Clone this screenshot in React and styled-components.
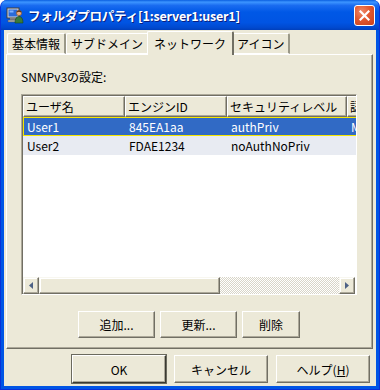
import React from "react";
import styled, { createGlobalStyle } from "styled-components";

const GlobalStyle = createGlobalStyle`
  html, body {
    margin: 0;
    padding: 0;
    background: #fff;
  }
  body {
    font-family: "Noto Sans CJK JP", "Liberation Sans", sans-serif;
    font-size: 12px;
    color: #000;
  }
`;

const Window = styled.div`
  width: 380px;
  height: 390px;
  display: flex;
  flex-direction: column;
  background: #0055e5;
  border-radius: 7px 7px 0 0;
  overflow: hidden;
  box-sizing: border-box;
  border: 1px solid #0831d9;
  border-top: none;
`;

const TitleBar = styled.div`
  height: 30px;
  flex: none;
  display: flex;
  align-items: center;
  padding: 0 4px 0 5px;
  gap: 4px;
  background: linear-gradient(
    to bottom,
    #0a5fe0 0%,
    #3d95ff 7%,
    #1a6cf0 18%,
    #0058e6 40%,
    #0054e3 75%,
    #0049cf 92%,
    #003fbb 100%
  );
`;

const Title = styled.span`
  flex: 1;
  color: #fff;
  font-weight: bold;
  font-size: 12.5px;
  letter-spacing: -0.2px;
  text-shadow: 1px 1px #0a1f80;
  white-space: nowrap;
`;

const CloseButton = styled.div`
  width: 21px;
  height: 21px;
  box-sizing: border-box;
  border: 1px solid #fff;
  border-radius: 3px;
  background: radial-gradient(circle at 35% 30%, #f08a6a 0%, #e2582f 45%, #c8401a 100%);
  display: flex;
  align-items: center;
  justify-content: center;
`;

const Content = styled.div`
  flex: 1;
  display: flex;
  flex-direction: column;
  background: #ece9d8;
  margin: 0 3px 3px 3px;
`;

const TabStrip = styled.div`
  height: 24px;
  display: flex;
  align-items: flex-end;
  padding-left: 3px;
  position: relative;
  z-index: 1;
`;

const Tab = styled.div`
  height: ${(p) => (p.$active ? "24px" : "21px")};
  box-sizing: border-box;
  padding: 0 ${(p) => (p.$active ? "6px" : "4px")};
  margin: ${(p) => (p.$active ? "0 -2px -1px -2px" : "0")};
  display: flex;
  align-items: center;
  background: #ece9d8;
  border-top: 1px solid #fff;
  border-left: 1px solid #fff;
  border-right: 2px solid ${(p) => (p.$active ? "#716f64" : "#9a9888")};
  border-bottom: ${(p) => (p.$active ? "none" : "1px solid #fff")};
  border-radius: 2px 2px 0 0;
  font-size: 12px;
  white-space: nowrap;
  position: relative;
  z-index: ${(p) => (p.$active ? 2 : 1)};
`;

const TabPanel = styled.div`
  height: 295px;
  box-sizing: border-box;
  margin: 0 3px 0 2px;
  border-top: 1px solid #fff;
  border-left: 1px solid #fff;
  border-right: 1px solid #716f64;
  border-bottom: 1px solid #716f64;
  box-shadow: inset -1px -1px #aca899;
  padding: 14px 0 0 14px;
  display: flex;
  flex-direction: column;
`;

const Label = styled.div`
  height: 16px;
  line-height: 16px;
  font-size: 12px;
  margin-bottom: 9px;
`;

const ListView = styled.div`
  width: 336px;
  height: 201px;
  box-sizing: border-box;
  background: #fff;
  border-top: 1px solid #aca899;
  border-left: 1px solid #aca899;
  border-right: 1px solid #fff;
  border-bottom: 1px solid #fff;
  box-shadow: inset 1px 1px #716f64;
  padding: 1px 0 0 1px;
  display: flex;
  flex-direction: column;
  overflow: hidden;
`;

const HeaderRow = styled.div`
  display: flex;
  height: 21px;
  flex: none;
`;

const HeaderCell = styled.div`
  width: ${(p) => p.$w}px;
  flex: none;
  box-sizing: border-box;
  background: #ece9d8;
  border-top: 1px solid #fff;
  border-left: 1px solid #fff;
  border-right: 1px solid #716f64;
  border-bottom: 1px solid #716f64;
  box-shadow: inset -1px -1px #aca899;
  padding-left: 2px;
  display: flex;
  align-items: center;
  white-space: nowrap;
  overflow: hidden;
  font-size: 12px;
`;

const Row = styled.div`
  display: flex;
  height: 19px;
  flex: none;
  box-sizing: border-box;
  background: ${(p) => (p.$selected ? "#316ac5" : "#e8ebf2")};
  color: ${(p) => (p.$selected ? "#fff" : "#000")};
  border: 1px solid ${(p) => (p.$selected ? "#f5e700" : "transparent")};
  border-right: none;
`;

const Cell = styled.div`
  width: ${(p) => p.$w}px;
  flex: none;
  box-sizing: border-box;
  padding-left: 3px;
  display: flex;
  align-items: center;
  white-space: nowrap;
  overflow: hidden;
  font-size: 12px;
`;

const ListBody = styled.div`
  flex: 1;
`;

const HScroll = styled.div`
  height: 17px;
  flex: none;
  display: flex;
  margin-right: 1px;
`;

const ScrollArrow = styled.div`
  width: 16px;
  flex: none;
  box-sizing: border-box;
  background: #ece9d8;
  border-top: 1px solid #f8f7f0;
  border-left: 1px solid #f8f7f0;
  border-right: 1px solid #716f64;
  border-bottom: 1px solid #716f64;
  box-shadow: inset -1px -1px #aca899, inset 1px 1px #fff;
  display: flex;
  align-items: center;
  justify-content: center;
`;

const Thumb = styled(ScrollArrow)`
  width: 181px;
`;

const Track = styled.div`
  flex: 1;
  background: repeating-conic-gradient(#fff 0 25%, #d8d5c8 0 50%) 0 0 / 2px 2px;
`;

const ButtonRow = styled.div`
  display: flex;
  gap: 5px;
  margin-top: 16px;
  padding-left: 57px;
`;

const Button = styled.button`
  width: ${(p) => p.$w}px;
  height: ${(p) => p.$h || 27}px;
  box-sizing: border-box;
  background: #ece9d8;
  font-family: "Noto Sans CJK JP", "Liberation Sans", sans-serif;
  font-size: 12px;
  color: #000;
  padding: 0;
  border-top: 1px solid #fff;
  border-left: 1px solid #fff;
  border-right: 1px solid ${(p) => (p.$default ? "#3a3a32" : "#716f64")};
  border-bottom: 1px solid ${(p) => (p.$default ? "#3a3a32" : "#716f64")};
  box-shadow: inset -1px -1px #aca899
    ${(p) => (p.$default ? ", 0 0 0 1px #6b6a5e" : "")};
  display: flex;
  align-items: center;
  justify-content: center;
`;

const Footer = styled.div`
  flex: 1;
  display: flex;
  justify-content: flex-end;
  align-items: flex-start;
  gap: 8px;
  padding: 6px 6px 0 0;
`;

const Underline = styled.span`
  text-decoration: underline;
`;

const columns = [
  { key: "name", label: "ユーザ名", w: 102 },
  { key: "engine", label: "エンジンID", w: 102 },
  { key: "level", label: "セキュリティレベル", w: 120 },
  { key: "auth", label: "認証プロトコル", w: 80 },
];

const users = [
  { name: "User1", engine: "845EA1aa", level: "authPriv", auth: "MD5" },
  { name: "User2", engine: "FDAE1234", level: "noAuthNoPriv", auth: "" },
];

const AppIcon = () => (
  <svg width="18" height="18" viewBox="0 0 18 18">
    <rect x="1" y="2" width="12" height="10" fill="#d8d8d8" stroke="#404040" />
    <rect x="2.5" y="3.5" width="9" height="7" fill="#2a6ad8" />
    <rect x="3.5" y="4.5" width="4" height="2" fill="#7fb2ff" />
    <rect x="4" y="12" width="6" height="2" fill="#808080" />
    <rect x="2" y="14" width="10" height="2" fill="#b0b0b0" stroke="#505050" strokeWidth="0.5" />
    <circle cx="13" cy="7" r="2.6" fill="#f0b080" stroke="#7a4a20" strokeWidth="0.6" />
    <path d="M10.6 5.8 Q13 3 15.4 5.8 L15 6.4 Q13 5 11 6.4 Z" fill="#5a3010" />
    <path d="M9 17 Q9 10.5 13 10.5 Q17 10.5 17 17 Z" fill="#3a7a3a" stroke="#1a4a1a" strokeWidth="0.6" />
  </svg>
);

const CloseIcon = () => (
  <svg width="11" height="11" viewBox="0 0 11 11">
    <path d="M1.5 1.5 L9.5 9.5 M9.5 1.5 L1.5 9.5" stroke="#fff" strokeWidth="2.2" strokeLinecap="square" />
  </svg>
);

const Arrow = ({ dir }) => (
  <svg width="4" height="7" viewBox="0 0 4 7">
    {dir === "left" ? (
      <path d="M4 0 L0 3.5 L4 7 Z" fill="#4d6185" />
    ) : (
      <path d="M0 0 L4 3.5 L0 7 Z" fill="#4d6185" />
    )}
  </svg>
);

const tabs = ["基本情報", "サブドメイン", "ネットワーク", "アイコン"];

export default function App() {
  return (
    <>
      <GlobalStyle />
      <Window>
        <TitleBar>
          <AppIcon />
          <Title>フォルダプロパティ[1:server1:user1]</Title>
          <CloseButton>
            <CloseIcon />
          </CloseButton>
        </TitleBar>
        <Content>
          <TabStrip>
            {tabs.map((t, i) => (
              <Tab key={t} $active={i === 2}>
                {t}
              </Tab>
            ))}
          </TabStrip>
          <TabPanel>
            <Label>SNMPv3の設定:</Label>
            <ListView>
              <HeaderRow>
                {columns.map((c) => (
                  <HeaderCell key={c.key} $w={c.w}>
                    {c.label}
                  </HeaderCell>
                ))}
              </HeaderRow>
              <ListBody>
                {users.map((u, i) => (
                  <Row key={u.name} $selected={i === 0}>
                    {columns.map((c) => (
                      <Cell key={c.key} $w={c.w}>
                        {u[c.key]}
                      </Cell>
                    ))}
                  </Row>
                ))}
              </ListBody>
              <HScroll>
                <ScrollArrow>
                  <Arrow dir="left" />
                </ScrollArrow>
                <Thumb />
                <Track />
                <ScrollArrow>
                  <Arrow dir="right" />
                </ScrollArrow>
              </HScroll>
            </ListView>
            <ButtonRow>
              <Button $w={77}>追加...</Button>
              <Button $w={77}>更新...</Button>
              <Button $w={58}>削除</Button>
            </ButtonRow>
          </TabPanel>
          <Footer>
            <Button $w={94} $h={28} $default>
              OK
            </Button>
            <Button $w={94} $h={28}>
              キャンセル
            </Button>
            <Button $w={94} $h={28}>
              ヘルプ(<Underline>H</Underline>)
            </Button>
          </Footer>
        </Content>
      </Window>
    </>
  );
}
